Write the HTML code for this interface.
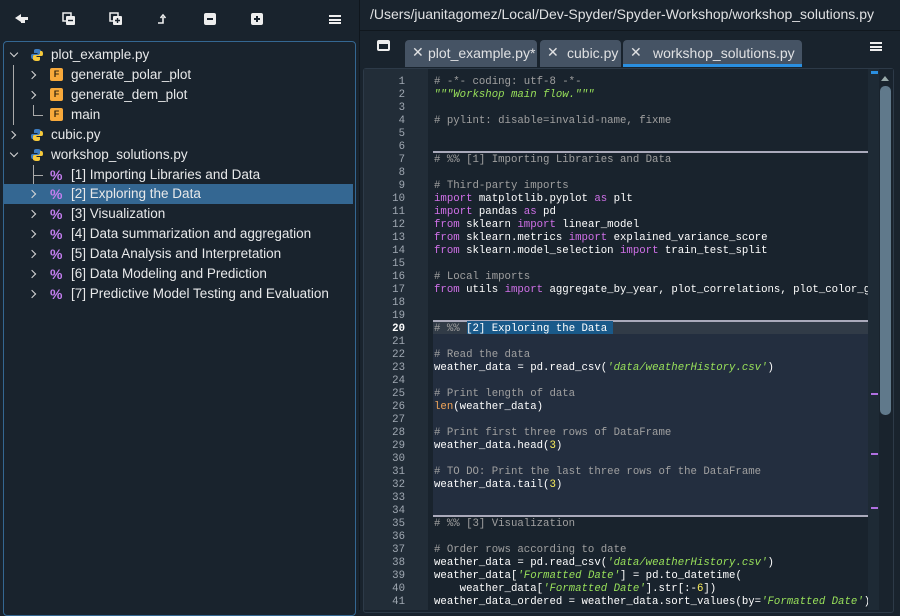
<!DOCTYPE html>
<html><head><meta charset="utf-8"><style>
*{margin:0;padding:0;box-sizing:border-box}
body{width:900px;height:610px;background:#19232d;overflow:hidden;position:relative;font-family:"Liberation Sans",sans-serif;color:#e0e1e3}
.abs{position:absolute}
.tree{left:3px;top:41px;width:353px;height:575px;border:1px solid #346792;border-radius:4px;background:#19232d}
.row{position:absolute;left:4px;width:349px;height:20px;font-size:13.5px;line-height:20px;color:#e8e9ea}
.row.sel{background:#346792}
.chev{position:absolute;width:6px;height:6px;border-right:1.6px solid #d8d8d8;border-bottom:1.6px solid #d8d8d8}
.chev.r{transform:rotate(-45deg)}
.chev.d{transform:rotate(45deg)}
.F{position:absolute;width:13px;height:13px;background:#f7a93b;border-radius:2px;color:#3a2a10;font-size:9px;line-height:13px;text-align:center;font-weight:bold}
.pct{position:absolute;color:#c47ef0;font-weight:bold;font-size:14px}
.py{position:absolute;width:14px;height:14px}
.code{left:434px;top:76px;font-family:"Liberation Mono",monospace;font-size:10.7px;line-height:13px;white-space:pre;color:#ffffff}
.nums{left:363px;top:76px;width:42px;text-align:right;font-family:"Liberation Mono",monospace;font-size:10.7px;line-height:13px;white-space:pre;color:#a0a8b2}
.c{color:#a0a0a0}.k{color:#d070e8}.s{color:#98e05a;font-style:italic}.n{color:#faed5c}.b{color:#f2a65a}
.tab{position:absolute;top:40px;height:27px;background:#455364;border-radius:4px 4px 0 0;font-size:14px;line-height:26px;color:#e0e1e3}
.tab .x{position:absolute;left:7px;top:-1px;font-size:14px}
</style></head><body>
<svg class="abs" style="left:14px;top:13px" width="16" height="12" viewBox="0 0 16 12"><path d="M1 5 L7 1 L7 4 L14 4 L14 7 L11 7 L11 10 L7 10 L7 9 Z" fill="#eee"/></svg>
<svg class="abs" style="left:62px;top:12px" width="14" height="14" viewBox="0 0 14 14"><rect x="1" y="1" width="8" height="8" fill="none" stroke="#eee" stroke-width="1.5"/><rect x="4" y="4" width="9" height="9" rx="1" fill="#eee"/><path d="M6 8.5h5" stroke="#19232d" stroke-width="1.4"/></svg>
<svg class="abs" style="left:109px;top:12px" width="14" height="14" viewBox="0 0 14 14"><rect x="1" y="1" width="8" height="8" fill="none" stroke="#eee" stroke-width="1.5"/><rect x="4" y="4" width="9" height="9" rx="1" fill="#eee"/><path d="M6 8.5h5M8.5 6v5" stroke="#19232d" stroke-width="1.4"/></svg>
<svg class="abs" style="left:157px;top:13px" width="12" height="12" viewBox="0 0 12 12"><path d="M1 10h5V4M3.5 5 6 2 8.5 5" fill="none" stroke="#eee" stroke-width="1.6"/></svg>
<div class="abs" style="left:204px;top:13px;width:12px;height:12px;background:#eee;border-radius:2px"><div class="abs" style="left:3px;top:5px;width:6px;height:1.5px;background:#19232d"></div></div>
<div class="abs" style="left:251px;top:13px;width:12px;height:12px;background:#eee;border-radius:2px"><div class="abs" style="left:3px;top:5.3px;width:6px;height:1.5px;background:#19232d"></div><div class="abs" style="left:5.3px;top:3px;width:1.5px;height:6px;background:#19232d"></div></div>
<div class="abs" style="left:329px;top:15px;width:12px;height:9px;border-top:2px solid #eee;border-bottom:2px solid #eee"><div class="abs" style="left:0;top:1.5px;width:12px;height:2px;background:#eee"></div></div>

<div class="abs tree"></div>
<div class="abs" style="left:13px;top:65px;width:1px;height:60px;background:#aaa"></div>
<div class="abs" style="left:33px;top:105px;width:1px;height:10px;background:#aaa"></div>
<div class="abs" style="left:33px;top:115px;width:10px;height:1px;background:#aaa"></div>
<div class="abs" style="left:33px;top:165px;width:1px;height:20px;background:#aaa"></div>
<div class="abs" style="left:33px;top:175px;width:10px;height:1px;background:#aaa"></div>

<div class="row" style="top:45px"><span class="chev d" style="left:7px;top:5px"></span><svg class="py" style="left:26px;top:3px" viewBox="0 0 14 14"><path d="M7 1C4 1 4 2 4 3v2h3.5v1H2.5C1 6 1 7.5 1 8.5S1.5 11 2.5 11H4V9c0-1 1-2 2-2h3.5c1 0 1.5-.5 1.5-1.5V3C11 2 10 1 7 1z" fill="#3b7bbf"/><path d="M7 13c3 0 3-1 3-2V9H6.5V8H11.5c1.5 0 1.5-1.5 1.5-2.5S12.5 3 11.5 3H10v2c0 1-1 2-2 2H4.5C3.5 7 3 7.5 3 8.5V11c0 1 1 2 4 2z" fill="#f5c93c"/></svg><span style="position:absolute;left:47px">plot_example.py</span></div>
<div class="row" style="top:65px"><span class="chev r" style="left:25px;top:7px"></span><span class="F" style="left:46px;top:3px">F</span><span style="position:absolute;left:67px">generate_polar_plot</span></div>
<div class="row" style="top:85px"><span class="chev r" style="left:25px;top:7px"></span><span class="F" style="left:46px;top:3px">F</span><span style="position:absolute;left:67px">generate_dem_plot</span></div>
<div class="row" style="top:105px"><span class="F" style="left:46px;top:3px">F</span><span style="position:absolute;left:67px">main</span></div>
<div class="row" style="top:125px"><span class="chev r" style="left:5px;top:7px"></span><svg class="py" style="left:26px;top:3px" viewBox="0 0 14 14"><path d="M7 1C4 1 4 2 4 3v2h3.5v1H2.5C1 6 1 7.5 1 8.5S1.5 11 2.5 11H4V9c0-1 1-2 2-2h3.5c1 0 1.5-.5 1.5-1.5V3C11 2 10 1 7 1z" fill="#3b7bbf"/><path d="M7 13c3 0 3-1 3-2V9H6.5V8H11.5c1.5 0 1.5-1.5 1.5-2.5S12.5 3 11.5 3H10v2c0 1-1 2-2 2H4.5C3.5 7 3 7.5 3 8.5V11c0 1 1 2 4 2z" fill="#f5c93c"/></svg><span style="position:absolute;left:47px">cubic.py</span></div>
<div class="row" style="top:145px"><span class="chev d" style="left:7px;top:5px"></span><svg class="py" style="left:26px;top:3px" viewBox="0 0 14 14"><path d="M7 1C4 1 4 2 4 3v2h3.5v1H2.5C1 6 1 7.5 1 8.5S1.5 11 2.5 11H4V9c0-1 1-2 2-2h3.5c1 0 1.5-.5 1.5-1.5V3C11 2 10 1 7 1z" fill="#3b7bbf"/><path d="M7 13c3 0 3-1 3-2V9H6.5V8H11.5c1.5 0 1.5-1.5 1.5-2.5S12.5 3 11.5 3H10v2c0 1-1 2-2 2H4.5C3.5 7 3 7.5 3 8.5V11c0 1 1 2 4 2z" fill="#f5c93c"/></svg><span style="position:absolute;left:47px">workshop_solutions.py</span></div>
<div class="row" style="top:165px"><span class="pct" style="left:46px;top:0">%</span><span style="position:absolute;left:67px">[1] Importing Libraries and Data</span></div>
<div class="row sel" style="top:184px"><span class="chev r" style="left:25px;top:7px"></span><span class="pct" style="left:46px;top:0">%</span><span style="position:absolute;left:67px">[2] Exploring the Data</span></div>
<div class="row" style="top:204px"><span class="chev r" style="left:25px;top:7px"></span><span class="pct" style="left:46px;top:0">%</span><span style="position:absolute;left:67px">[3] Visualization</span></div>
<div class="row" style="top:224px"><span class="chev r" style="left:25px;top:7px"></span><span class="pct" style="left:46px;top:0">%</span><span style="position:absolute;left:67px">[4] Data summarization and aggregation</span></div>
<div class="row" style="top:244px"><span class="chev r" style="left:25px;top:7px"></span><span class="pct" style="left:46px;top:0">%</span><span style="position:absolute;left:67px">[5] Data Analysis and Interpretation</span></div>
<div class="row" style="top:264px"><span class="chev r" style="left:25px;top:7px"></span><span class="pct" style="left:46px;top:0">%</span><span style="position:absolute;left:67px">[6] Data Modeling and Prediction</span></div>
<div class="row" style="top:284px"><span class="chev r" style="left:25px;top:7px"></span><span class="pct" style="left:46px;top:0">%</span><span style="position:absolute;left:67px">[7] Predictive Model Testing and Evaluation</span></div>

<div class="abs" style="left:359px;top:0;width:1px;height:610px;background:#0f161d"></div>
<div class="abs" style="left:370px;top:6px;font-size:14px;color:#e0e1e3">/Users/juanitagomez/Local/Dev-Spyder/Spyder-Workshop/workshop_solutions.py</div>
<div class="abs" style="left:360px;top:30px;width:540px;height:1px;background:#10171e"></div>

<div class="abs" style="left:377px;top:40px;width:13px;height:11px;border:2px solid #eee;border-top-width:4px;border-radius:2px"></div>
<div class="tab" style="left:405px;width:132px"><span class="x">✕</span><span style="position:absolute;left:23px">plot_example.py*</span></div>
<div class="tab" style="left:540px;width:81px"><span class="x">✕</span><span style="position:absolute;left:27px">cubic.py</span></div>
<div class="tab" style="left:623px;width:179px;border-bottom:3px solid #2a8fe0"><span class="x">✕</span><span style="position:absolute;left:30px">workshop_solutions.py</span></div>
<div class="abs" style="left:870px;top:42px;width:12px;height:9px;border-top:2px solid #eee;border-bottom:2px solid #eee"><div class="abs" style="left:0;top:1.5px;width:12px;height:2px;background:#eee"></div></div>

<div class="abs" style="left:363px;top:68px;width:531px;height:545px;border:1px solid #2d3a48;border-radius:3px;background:#19232d"></div>
<div class="abs" style="left:364px;top:69px;width:64px;height:541px;background:#222d38"></div>
<div class="abs" style="left:433px;top:321px;width:435px;height:195px;background:#232e3f"></div>
<div class="abs" style="left:433px;top:321px;width:435px;height:13px;background:#313b47"></div>
<div class="abs" style="left:433px;top:151px;width:435px;height:2px;background:#aab"></div>
<div class="abs" style="left:433px;top:320px;width:435px;height:2px;background:#aab"></div>
<div class="abs" style="left:433px;top:515px;width:435px;height:2px;background:#aab"></div>
<div class="abs" style="left:467px;top:321px;width:146px;height:13px;background:#1a5a8a"></div>
<div class="abs" style="left:868px;top:69px;width:11px;height:541px;background:#1e2a35"></div>
<div class="abs" style="left:871px;top:71px;width:7px;height:3px;background:#2a8fe0"></div>
<div class="abs" style="left:871px;top:393px;width:7px;height:2px;background:#b070e0"></div>
<div class="abs" style="left:871px;top:453px;width:7px;height:2px;background:#b070e0"></div>
<div class="abs" style="left:871px;top:507px;width:7px;height:2px;background:#b070e0"></div>
<div class="abs" style="left:879px;top:69px;width:14px;height:541px;background:#19232d"></div>
<div class="abs" style="left:881px;top:76px;width:0;height:0;border-left:4.5px solid transparent;border-right:4.5px solid transparent;border-bottom:5px solid #9aa"></div>
<div class="abs" style="left:880px;top:86px;width:11px;height:329px;background:#60798b;border-radius:5px"></div>

<div class="abs nums">1
2
3
4
5
6
7
8
9
10
11
12
13
14
15
16
17
18
19
<b style="color:#fff">20</b>
21
22
23
24
25
26
27
28
29
30
31
32
33
34
35
36
37
38
39
40
41</div>
<div class="abs" style="left:433px;top:74px;width:435px;height:536px;overflow:hidden"><div class="abs code" style="left:1px;top:2px"><span class="c"># -*- coding: utf-8 -*-</span>
<span class="s">"""Workshop main flow."""</span>

<span class="c"># pylint: disable=invalid-name, fixme</span>


<span class="c"># %% [1] Importing Libraries and Data</span>

<span class="c"># Third-party imports</span>
<span class="k">import</span> matplotlib.pyplot <span class="k">as</span> plt
<span class="k">import</span> pandas <span class="k">as</span> pd
<span class="k">from</span> sklearn <span class="k">import</span> linear_model
<span class="k">from</span> sklearn.metrics <span class="k">import</span> explained_variance_score
<span class="k">from</span> sklearn.model_selection <span class="k">import</span> train_test_split

<span class="c"># Local imports</span>
<span class="k">from</span> utils <span class="k">import</span> aggregate_by_year, plot_correlations, plot_color_gradients


<span class="c"># %% </span>[2] Exploring the Data

<span class="c"># Read the data</span>
weather_data = pd.read_csv(<span class="s">'data/weatherHistory.csv'</span>)

<span class="c"># Print length of data</span>
<span class="b">len</span>(weather_data)

<span class="c"># Print first three rows of DataFrame</span>
weather_data.head(<span class="n">3</span>)

<span class="c"># TO DO: Print the last three rows of the DataFrame</span>
weather_data.tail(<span class="n">3</span>)


<span class="c"># %% [3] Visualization</span>

<span class="c"># Order rows according to date</span>
weather_data = pd.read_csv(<span class="s">'data/weatherHistory.csv'</span>)
weather_data[<span class="s">'Formatted Date'</span>] = pd.to_datetime(
    weather_data[<span class="s">'Formatted Date'</span>].str[:-<span class="n">6</span>])
weather_data_ordered = weather_data.sort_values(by=<span class="s">'Formatted Date'</span>)</div></div>
</body></html>
